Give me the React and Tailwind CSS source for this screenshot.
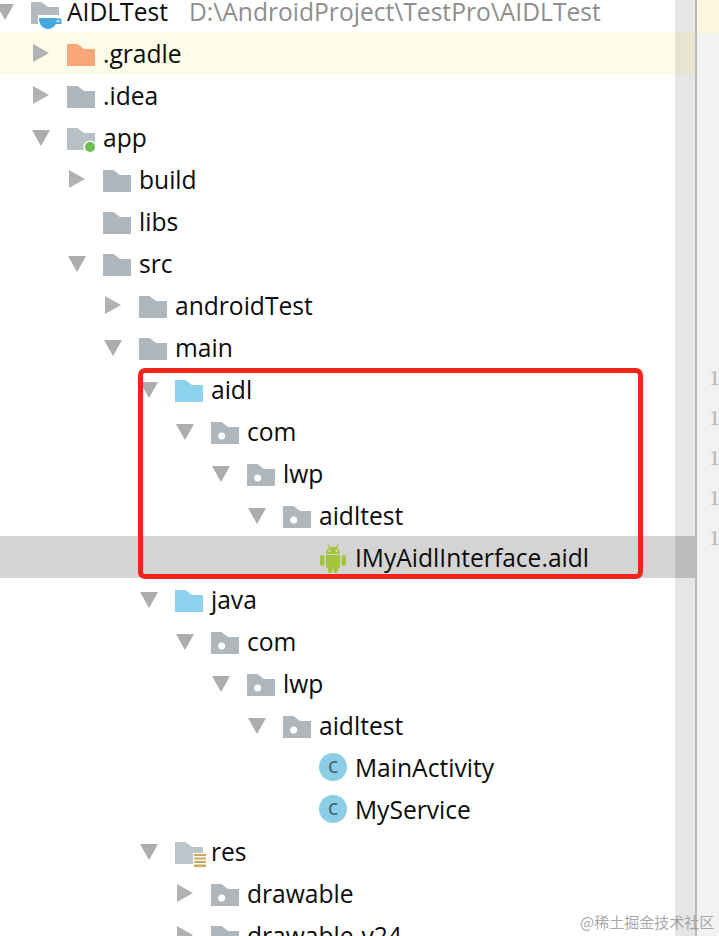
import React from 'react';

const rows = [
  { name: 'AIDLTest', depth: 0, arrow: 'down', icon: 'root', path: 'D:\\AndroidProject\\TestPro\\AIDLTest' },
  { name: '.gradle', depth: 1, arrow: 'right', icon: 'orange', tone: 'yellow' },
  { name: '.idea', depth: 1, arrow: 'right', icon: 'folder' },
  { name: 'app', depth: 1, arrow: 'down', icon: 'module' },
  { name: 'build', depth: 2, arrow: 'right', icon: 'folder' },
  { name: 'libs', depth: 2, icon: 'folder' },
  { name: 'src', depth: 2, arrow: 'down', icon: 'folder' },
  { name: 'androidTest', depth: 3, arrow: 'right', icon: 'folder' },
  { name: 'main', depth: 3, arrow: 'down', icon: 'folder' },
  { name: 'aidl', depth: 4, arrow: 'down', icon: 'blue' },
  { name: 'com', depth: 5, arrow: 'down', icon: 'package' },
  { name: 'lwp', depth: 6, arrow: 'down', icon: 'package' },
  { name: 'aidltest', depth: 7, arrow: 'down', icon: 'package' },
  { name: 'IMyAidlInterface.aidl', depth: 8, icon: 'android', tone: 'selected' },
  { name: 'java', depth: 4, arrow: 'down', icon: 'blue' },
  { name: 'com', depth: 5, arrow: 'down', icon: 'package' },
  { name: 'lwp', depth: 6, arrow: 'down', icon: 'package' },
  { name: 'aidltest', depth: 7, arrow: 'down', icon: 'package' },
  { name: 'MainActivity', depth: 8, icon: 'class' },
  { name: 'MyService', depth: 8, icon: 'class' },
  { name: 'res', depth: 4, arrow: 'down', icon: 'res' },
  { name: 'drawable', depth: 5, arrow: 'right', icon: 'package' },
  { name: 'drawable-v24', depth: 5, arrow: 'right', icon: 'package' },
];

const Arrow = ({ dir }) => {
  if (dir === 'down') {
    return (
      <svg width="18" height="16" viewBox="0 0 18 16" className="mt-[2px] block">
        <path d="M0 0H18L9 16Z" fill="#adadad" />
      </svg>
    );
  }
  return (
    <svg width="16" height="18" viewBox="0 0 16 18" className="block">
      <path d="M0 0L16 9L0 18Z" fill="#b2b2b2" />
    </svg>
  );
};

const folderPath = 'M0 0H10.5L17 5H28V22H0Z';

const Folder = ({ color = '#afb6bc', children }) => (
  <svg width="28" height="30" viewBox="0 0 28 30" className="mt-1 block overflow-visible">
    <path d={folderPath} fill={color} transform="translate(0 4)" />
    {children}
  </svg>
);

const AndroidIcon = () => (
  <svg width="28" height="30" viewBox="0 0 28 30" className="mt-[2px] block">
    <g fill="#a3c43d">
      <path d="M7 11C7 6.5 10 4 14 4S21 6.500 21 11Z" />
      <path d="M9 1.500L11 5M19 1.500L17 5" stroke="#a3c43d" strokeWidth="1.200" />
      <path d="M7 12H21V24a1.500 1.500 0 0 1-1.500 1.500H8.500A1.500 1.500 0 0 1 7 24Z" />
      <rect x="1" y="12" width="4.500" height="11" rx="2.200" />
      <rect x="22.500" y="12" width="4.500" height="11" rx="2.200" />
      <rect x="9" y="24" width="4.500" height="6" rx="2.200" />
      <rect x="14.500" y="24" width="4.500" height="6" rx="2.200" />
    </g>
    <circle cx="10.500" cy="7.800" r="1" fill="#e8f0c8" />
    <circle cx="17.500" cy="7.800" r="1" fill="#e8f0c8" />
  </svg>
);

const Icon = ({ type }) => {
  if (type === 'orange') return <Folder color="#f8a878" />;
  if (type === 'blue') return <Folder color="#8ed2ee" />;
  if (type === 'package') {
    return (
      <Folder>
        <circle cx="10.700" cy="18" r="3.500" fill="#fff" />
      </Folder>
    );
  }
  if (type === 'module') {
    return (
      <Folder color="#b9c0c5">
        <circle cx="23" cy="23" r="6.500" fill="#fff" />
        <circle cx="23" cy="23" r="5" fill="#6cbd4e" />
      </Folder>
    );
  }
  if (type === 'res') {
    return (
      <Folder color="#bcc5c9">
        <rect x="18" y="15" width="14" height="16" fill="#fff" />
        <g fill="#cfa95e">
          <rect x="19" y="16" width="12" height="2" />
          <rect x="19" y="19.500" width="12" height="2" />
          <rect x="19" y="23" width="12" height="2" />
          <rect x="19" y="26.500" width="12" height="2.500" />
        </g>
      </Folder>
    );
  }
  if (type === 'root') {
    return (
      <Folder color="#b2b9bf">
        <path d="M7 17H32V34H7Z" fill="#fff" />
        <path d="M8 20H26C26 27 22 31 17 31S8 27 8 20Z" fill="#47a7dc" />
        <path d="M25 21.500H29.500V25H24" fill="none" stroke="#47a7dc" strokeWidth="1.800" />
      </Folder>
    );
  }
  if (type === 'android') return <AndroidIcon />;
  if (type === 'class') {
    return (
      <div className="flex h-7 w-7 items-center justify-center rounded-full bg-[#8ccde6] pb-[3px] text-[21px] leading-none text-[#3f5c73]">
        c
      </div>
    );
  }
  return <Folder />;
};

const TreeRow = ({ row }) => {
  const bg = row.tone === 'yellow' ? 'bg-[#fcfce8]' : row.tone === 'selected' ? 'bg-[#d4d4d4]' : '';
  const barBg =
    row.tone === 'yellow' ? 'bg-[#e6e6d0]' : row.tone === 'selected' ? 'bg-[#bcbcbc]' : 'bg-[#e6e6e6]';

  return (
    <div className="flex h-[42px] shrink-0">
      <div className={`relative flex min-w-0 flex-1 items-center whitespace-nowrap ${bg}`}>
        <div className="flex items-center" style={{ marginLeft: 36 * row.depth - 5 }}>
          <div className="flex w-[36px] justify-center pr-4">{row.arrow && <Arrow dir={row.arrow} />}</div>
          <div className="w-[36px]">
            <Icon type={row.icon} />
          </div>
          <span className="pt-[2px] text-[24.6px] leading-none text-[#0c0c0c]">{row.name}</span>
          {row.path && (
            <span className="ml-[21px] pt-[2px] text-[24.6px] leading-none text-[#8e8e8e]">{row.path}</span>
          )}
        </div>
      </div>
      <div className={`w-5 shrink-0 ${barBg}`} />
    </div>
  );
};

export default function App() {
  return (
    <div className="relative flex h-[936px] w-[719px] overflow-hidden bg-white font-['Open_Sans',sans-serif]">
      <div className="-mt-[10px] flex w-[695px] shrink-0 flex-col">
        {rows.map((row, i) => (
          <TreeRow key={i} row={row} />
        ))}
      </div>
      <div className="w-0.5 shrink-0 bg-[#b9b9b9]" />
      <div className="flex flex-1 flex-col bg-[#f2f2f2]">
        <div className="h-[33px] bg-[#fdf6df]" />
        <div className="flex flex-col gap-[16px] pl-[12px] pt-[333px] font-['Liberation_Serif',serif] text-[22px] leading-[24px] text-[#b5b5b5]">
          <span>1</span>
          <span>1</span>
          <span>1</span>
          <span>1</span>
          <span>1</span>
        </div>
      </div>
      {/* red annotation box drawn over the tree */}
      <div className="absolute left-[138px] top-[368px] h-[211px] w-[505px] rounded-[7px] border-[5px] border-[#f5231a]" />
      <div className="absolute left-[580px] top-[912px] font-['Noto_Sans_CJK_SC',sans-serif] text-[15px] leading-[20px] text-[#8f8f8f]/80">
        @稀土掘金技术社区
      </div>
    </div>
  );
}
